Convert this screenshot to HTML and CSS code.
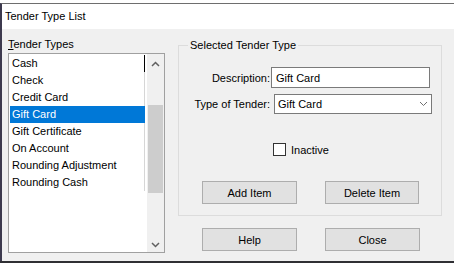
FILE: index.html
```html
<!DOCTYPE html>
<html lang="en">
<head>
  <meta charset="UTF-8">
  <title>Tender Type List</title>
  <link rel="stylesheet" href="styles.css">
</head>
<body>

  <div class="window">
    <div class="titlebar">Tender Type List</div>

    <div class="content">
      <div class="left-col">
        <div class="list-label"><u>T</u>ender Types</div>
        <div class="listbox">
          <ul class="items">
            <li class="item focus">Cash</li>
            <li class="item">Check</li>
            <li class="item">Credit Card</li>
            <li class="item selected">Gift Card</li>
            <li class="item">Gift Certificate</li>
            <li class="item">On Account</li>
            <li class="item">Rounding Adjustment</li>
            <li class="item">Rounding Cash</li>
          </ul>
          <div class="scrollbar">
            <div class="arrow up">
              <svg width="9" height="6" viewBox="0 0 9 6"><path d="M1 5 L4.5 1.5 L8 5" fill="none" stroke="#606060" stroke-width="1.5"/></svg>
            </div>
            <div class="track"><div class="thumb"></div></div>
            <div class="arrow down">
              <svg width="9" height="6" viewBox="0 0 9 6"><path d="M1 1 L4.5 4.5 L8 1" fill="none" stroke="#606060" stroke-width="1.5"/></svg>
            </div>
          </div>
        </div>
      </div>

      <div class="right-col">
        <fieldset class="group">
          <legend>Selected Tender Type</legend>

          <div class="fields">
            <label class="field-label">Description:</label>
            <input class="textbox" type="text" value="Gift Card">
            <label class="field-label">Type of Tender:</label>
            <div class="select">
              <span>Gift Card</span>
              <svg width="9" height="6" viewBox="0 0 9 6"><path d="M1 1 L4.5 4.5 L8 1" fill="none" stroke="#707070" stroke-width="1"/></svg>
            </div>
          </div>

          <div class="check-row">
            <span class="checkbox"></span>
            <span>Inactive</span>
          </div>

          <div class="btn-row">
            <button class="btn">Add Item</button>
            <button class="btn narrow">Delete Item</button>
          </div>
        </fieldset>

        <div class="btn-row bottom">
          <button class="btn">Help</button>
          <button class="btn">Close</button>
        </div>
      </div>
    </div>
  </div>

  <div class="taskbar"></div>

</body>
</html>
```

FILE: styles.css
```css
body {
  margin: 0;
  background: #fff;
  font-family: "Liberation Sans", Arial, sans-serif;
  font-size: 11px;
  color: #000;
  overflow: hidden;
}

.window {
  margin-top: 3px;
  border-top: 1px solid #6e6e6e;
  border-left: 2px solid #3d3a4e;
}

.titlebar {
  height: 25px;
  line-height: 25px;
  padding-left: 3px;
  background: #fff;
}

.content {
  height: 232px;
  box-sizing: border-box;
  background: #f0f0f0;
  display: flex;
  padding-left: 6px;
}

/* lista a sinistra */
.left-col {
  width: 157px;
}

.list-label {
  padding-top: 6px;
  line-height: 18px;
}

.listbox {
  height: 200px;
  box-sizing: border-box;
  border: 1px solid #a0a0a0;
  background: #fff;
  display: flex;
}

.items {
  list-style: none;
  margin: 0;
  padding: 1px 0 0 1px;
  flex: 1;
}

.item {
  width: 135px;
  height: 17px;
  line-height: 17px;
  padding-left: 2px;
  box-sizing: border-box;
  border-right: 1px solid #d6d6d6;
  white-space: nowrap;
}

.item.focus {
  border-right-color: #000;
}

.item.selected {
  background: #0078d7;
  color: #fff;
  border-right-color: transparent;
}

.scrollbar {
  width: 17px;
  background: #f0f0f0;
  display: flex;
  flex-direction: column;
}

.arrow {
  height: 17px;
  display: flex;
  align-items: center;
  justify-content: center;
}

.arrow.up {
  padding-top: 3px;
  box-sizing: border-box;
}

.arrow.down {
  padding-top: 2px;
  box-sizing: border-box;
}

.track {
  flex: 1;
}

.thumb {
  margin: 34px 1px 0;
  height: 88px;
  background: #cdcdcd;
}

/* gruppo a destra */
.right-col {
  margin-left: 13px;
  padding-top: 9px;
}

.group {
  width: 264px;
  box-sizing: border-box;
  margin: 0;
  padding: 0 0 11px 0;
  border: 1px solid #dcdcdc;
  min-width: 0;
}

.group legend {
  margin-left: 9px;
  padding: 0 2px;
  line-height: 14px;
}

.fields {
  display: grid;
  grid-template-columns: 92px auto;
  row-gap: 6px;
  align-items: center;
  margin-top: 15px;
}

.field-label {
  text-align: right;
  padding-right: 1px;
  white-space: nowrap;
}

.textbox {
  width: 159px;
  height: 21px;
  box-sizing: border-box;
  margin: 0;
  padding: 0 4px;
  border: 1px solid #7a7a7a;
  background: #fff;
  font-family: inherit;
  font-size: 11px;
  color: #000;
  outline: none;
}

.select {
  width: 158px;
  height: 20px;
  box-sizing: border-box;
  margin-left: 3px;
  padding: 0 3px 0 3px;
  border: 1px solid #7a7a7a;
  background: #fff;
  display: flex;
  align-items: center;
  justify-content: space-between;
}

.check-row {
  margin: 29px 0 0 94px;
  display: flex;
  align-items: center;
  gap: 5px;
  height: 13px;
}

.checkbox {
  width: 13px;
  height: 13px;
  box-sizing: border-box;
  border: 1px solid #333;
  background: #fff;
}

.btn-row {
  display: flex;
  gap: 28px;
  margin: 25px 0 0 23px;
}

.btn-row.bottom {
  margin: 12px 0 0 24px;
}

.btn {
  width: 95px;
  height: 23px;
  margin: 0;
  padding: 0;
  border: 1px solid #adadad;
  background: #e1e1e1;
  font-family: inherit;
  font-size: 11px;
  color: #000;
}

.btn.narrow {
  width: 94px;
}

.taskbar {
  height: 2px;
  background: #2f2f33;
}
```
